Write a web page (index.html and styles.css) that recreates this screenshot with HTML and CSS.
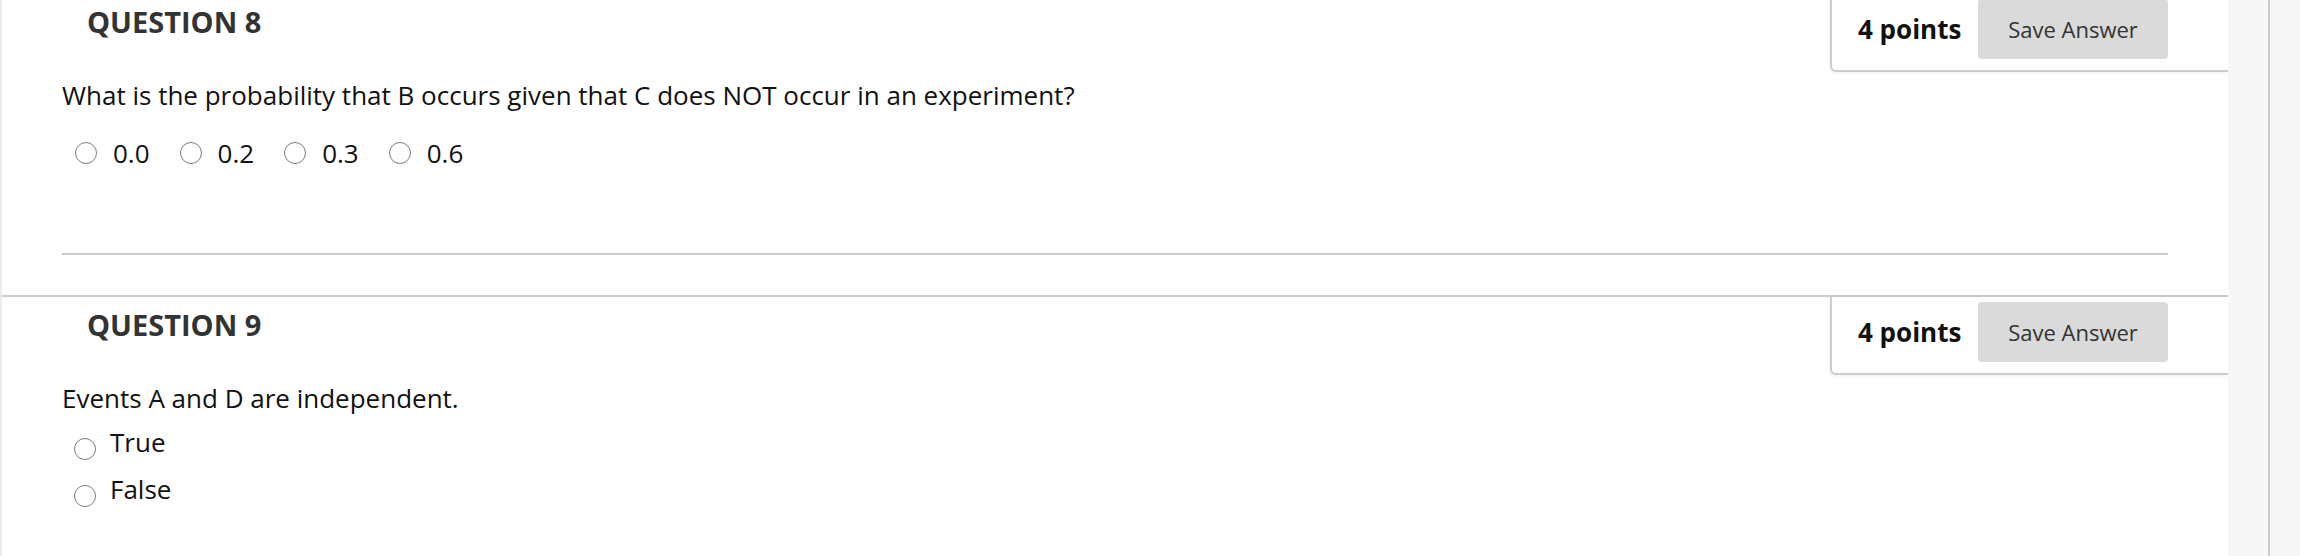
FILE: index.html
```html
<!DOCTYPE html>
<html lang="en">
<head>
<meta charset="utf-8">
<title>Questions</title>
<link rel="stylesheet" href="styles.css">
</head>
<body>
<div class="page">
  <main class="content">
    <section class="question">
      <div class="q-head">
        <h3 class="q-title">QUESTION 8</h3>
        <div class="q-points">
          <span class="pts">4 points</span>
          <button class="save" type="button">Save Answer</button>
        </div>
      </div>
      <div class="q-body">
        <p class="q-text">What is the probability that B occurs given that C does NOT occur in an experiment?</p>
        <ul class="opts opts-inline">
          <li class="opt"><span class="radio"></span><span class="lbl">0.0</span></li>
          <li class="opt"><span class="radio"></span><span class="lbl">0.2</span></li>
          <li class="opt"><span class="radio"></span><span class="lbl">0.3</span></li>
          <li class="opt"><span class="radio"></span><span class="lbl">0.6</span></li>
        </ul>
        <hr class="sep">
      </div>
    </section>
    <section class="question">
      <div class="q-head">
        <h3 class="q-title">QUESTION 9</h3>
        <div class="q-points">
          <span class="pts">4 points</span>
          <button class="save" type="button">Save Answer</button>
        </div>
      </div>
      <div class="q-body">
        <p class="q-text">Events A and D are independent.</p>
        <ul class="opts opts-list">
          <li class="opt"><span class="radio"></span><span class="lbl">True</span></li>
          <li class="opt"><span class="radio"></span><span class="lbl">False</span></li>
        </ul>
      </div>
    </section>
  </main>
  <aside class="rail">
    <div class="rail-a"></div>
    <div class="rail-b"></div>
  </aside>
</div>
</body>
</html>
```

FILE: styles.css
```css
html, body {
  margin: 0;
  padding: 0;
  background: #ffffff;
  overflow: hidden;
}

body {
  font-family: "Open Sans", "Noto Sans", sans-serif;
  color: #111111;
}

.page {
  display: flex;
  height: 556px;
}

.content {
  flex: none;
  width: 2228px;
  box-sizing: border-box;
  border-left: 2px solid #ececec;
  margin-top: -8px;
}

.rail {
  flex: 1;
  display: flex;
  background: #f7f7f7;
}

.rail-a {
  width: 40px;
  border-right: 2px solid #cccccc;
}

.rail-b {
  flex: 1;
}

.question {
  border-top: 2px solid #cccccc;
}

.q-head {
  display: flex;
  justify-content: space-between;
  align-items: flex-start;
}

.q-title {
  margin: 8px 0 0 85px;
  font-size: 29px;
  font-weight: 700;
  color: #333333;
  line-height: 40px;
}

.q-points {
  width: 398px;
  box-sizing: border-box;
  display: flex;
  align-items: center;
  padding: 5px 60px 11px 26px;
  border-left: 2px solid #cccccc;
  border-bottom: 2px solid #cccccc;
  border-bottom-left-radius: 6px;
  box-shadow: 0 1px 4px rgba(0, 0, 0, 0.07);
  background: #ffffff;
}

.pts {
  margin-right: auto;
  font-size: 26px;
  font-weight: 700;
  color: #111111;
  line-height: 36px;
}

.save {
  flex: none;
  width: 190px;
  height: 60px;
  border: none;
  border-radius: 4px;
  background: #dadada;
  color: #333333;
  font-family: "Open Sans", "Noto Sans", sans-serif;
  font-size: 22px;
  padding: 0;
}

.q-body {
  padding: 0 60px 0 60px;
}

.q-text {
  margin: 5px 0 0 0;
  font-size: 26px;
  line-height: 36px;
  color: #111111;
}

.opts {
  list-style: none;
  margin: 0;
  padding: 0;
  font-size: 26px;
  line-height: 36px;
}

.opts-inline {
  display: flex;
  gap: 30px;
  margin-top: 22px;
  padding-left: 13px;
}

.opts-inline .opt {
  display: flex;
  align-items: center;
  gap: 16px;
}

.opts-list {
  margin-top: 8px;
  padding-left: 12px;
}

.opts-list .opt {
  display: flex;
  align-items: flex-start;
  gap: 14px;
  margin-bottom: 11px;
}

.opts-list .radio {
  margin-top: 14px;
}

.radio {
  flex: none;
  width: 22px;
  height: 22px;
  box-sizing: border-box;
  border: 1.5px solid #7d7d7d;
  border-radius: 50%;
  background: #ffffff;
}

.lbl {
  color: #111111;
}

.sep {
  border: none;
  border-top: 2px solid #cccccc;
  margin: 82px 0 40px 0;
  height: 0;
}
```
